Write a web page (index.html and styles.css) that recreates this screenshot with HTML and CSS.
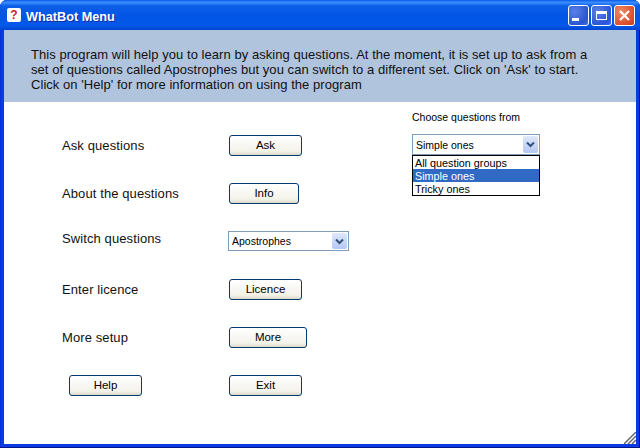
FILE: index.html
```html
<!DOCTYPE html>
<html lang="en">
<head>
    <meta charset="UTF-8">
    <title>WhatBot Menu</title>
    <link rel="stylesheet" href="styles.css">
</head>
<body>
    <div class="window">
        <div class="titlebar">
            <div class="app-icon">?</div>
            <div class="title">WhatBot Menu</div>
            <div class="controls">
                <div class="ctl"><span class="min-glyph"></span></div>
                <div class="ctl"><span class="max-glyph"></span></div>
                <div class="ctl ctl-close">
                    <svg width="13" height="13" viewBox="0 0 13 13"><path d="M2 2 L11 11 M11 2 L2 11" stroke="#fff" stroke-width="2.2" fill="none"/></svg>
                </div>
            </div>
        </div>
        <div class="client">
            <div class="banner">
                This program will help you to learn by asking questions. At the moment, it is set up to ask from a<br>
                set of questions called Apostrophes but you can switch to a different set. Click on 'Ask' to start.<br>
                Click on 'Help' for more information on using the program
            </div>
            <div class="main">
                <div class="menu">
                    <div class="label">Ask questions</div>
                    <div class="btn w73">Ask</div>
                    <div class="label">About the questions</div>
                    <div class="btn w70">Info</div>
                    <div class="label label-up">Switch questions</div>
                    <div class="combo combo-wide">
                        <span>Apostrophes</span>
                        <div class="arrow"><svg width="9" height="7" viewBox="0 0 9 7"><path d="M1 1.5 L4.5 5 L8 1.5" stroke="#36507e" stroke-width="2" fill="none"/></svg></div>
                    </div>
                    <div class="label">Enter licence</div>
                    <div class="btn w73">Licence</div>
                    <div class="label">More setup</div>
                    <div class="btn w78">More</div>
                    <div class="btn w73 btn-help">Help</div>
                    <div class="btn w73">Exit</div>
                </div>
                <div class="chooser">
                    <div class="small-label">Choose questions from</div>
                    <div class="combo-wrap">
                        <div class="combo">
                            <span>Simple ones</span>
                            <div class="arrow"><svg width="9" height="7" viewBox="0 0 9 7"><path d="M1 1.5 L4.5 5 L8 1.5" stroke="#36507e" stroke-width="2" fill="none"/></svg></div>
                        </div>
                        <div class="dropdown">
                            <div class="opt">All question groups</div>
                            <div class="opt opt-sel">Simple ones</div>
                            <div class="opt">Tricky ones</div>
                        </div>
                    </div>
                </div>
            </div>
            <svg class="grip" width="12" height="12" viewBox="0 0 12 12"><path d="M0 12 L12 0 M4 12 L12 4 M8 12 L12 8" stroke="#5f5f66" stroke-width="1.4" fill="none"/></svg>
        </div>
    </div>
</body>
</html>
```

FILE: styles.css
```css
html, body {
    margin: 0;
    padding: 0;
    background: #fff;
}

.window {
    width: 640px;
    height: 448px;
    display: flex;
    flex-direction: column;
    box-sizing: border-box;
    background: #0a3be0;
    border-radius: 7px 7px 0 0;
    overflow: hidden;
    box-shadow: inset 0 -1px #00138c, inset -1px 0 #00138c, inset 1px 0 #0831d9;
    font-family: "Liberation Sans", sans-serif;
    color: #000;
}

.titlebar {
    height: 30px;
    flex: none;
    display: flex;
    align-items: center;
    padding: 0 5px 0 7px;
    background: linear-gradient(#0a5be8 0%, #3b8dff 8%, #0a5ee6 20%, #0155e6 55%, #0358ea 85%, #0246d0 100%);
}

.app-icon {
    width: 14px;
    height: 14px;
    border-radius: 2px;
    background: #fff;
    color: #c8252b;
    font: bold 12px/14px "Liberation Sans", sans-serif;
    text-align: center;
    margin-right: 5px;
}

.title {
    flex: 1;
    padding-top: 3px;
    color: #fff;
    font: bold 12.7px "Liberation Sans", sans-serif;
    text-shadow: 1px 1px #0b2e9a;
}

.controls {
    display: flex;
    gap: 2px;
}

.ctl {
    width: 19px;
    height: 19px;
    border: 1px solid #fff;
    border-radius: 3px;
    background: radial-gradient(circle at 30% 30%, #5b82e6, #2a55d2 70%, #3f6fe6);
    position: relative;
    display: flex;
    align-items: center;
    justify-content: center;
}

.ctl-close {
    background: radial-gradient(circle at 30% 30%, #ee8a68, #dd5230 65%, #c93c18);
}

.min-glyph {
    width: 7px;
    height: 3px;
    background: #fff;
    margin: 8px 6px 0 0;
}

.max-glyph {
    width: 11px;
    height: 9px;
    border: 1px solid #fff;
    border-top-width: 3px;
    box-sizing: border-box;
}

.client {
    flex: 1;
    margin: 0 4px 4px;
    background: #fff;
    position: relative;
}

.banner {
    height: 72px;
    box-sizing: border-box;
    padding: 17px 0 0 27px;
    background: #b0c4de;
    font: 13px/15px "Liberation Sans", sans-serif;
    letter-spacing: 0.05px;
    color: #111;
}

.main {
    display: flex;
}

.menu {
    width: 350px;
    box-sizing: border-box;
    padding: 33px 0 0 58px;
    display: grid;
    grid-template-columns: 166px 1fr;
    grid-auto-rows: 21px;
    row-gap: 27px;
    align-items: center;
}

.label {
    font-size: 13px;
    letter-spacing: 0.1px;
    color: #111;
}

.label-up {
    margin-top: -6px;
}

.btn {
    height: 21px;
    box-sizing: border-box;
    margin-left: 1px;
    border: 1px solid #003c74;
    border-radius: 3px;
    background: linear-gradient(#fff, #f3f2ea 80%, #dcd8c8);
    font-size: 11.5px;
    line-height: 19px;
    text-align: center;
}

.w70 { width: 70px; }
.w73 { width: 73px; }
.w78 { width: 78px; }

.btn-help {
    margin-left: 7px;
}

.combo {
    height: 21px;
    box-sizing: border-box;
    border: 1px solid #7f9db9;
    background: #fff;
    display: flex;
    align-items: center;
    justify-content: space-between;
    padding: 0 1px 0 3px;
    font-size: 10.5px;
}

.combo-wide {
    width: 121px;
    height: 20px;
    margin-top: -1px;
}

.arrow {
    width: 15px;
    height: calc(100% - 2px);
    border-radius: 2px;
    background: linear-gradient(#dfe8fb, #b4c7f3);
    display: flex;
    align-items: center;
    justify-content: center;
}

.chooser {
    width: 128px;
    margin-left: 58px;
    padding-top: 9px;
}

.small-label {
    font-size: 10.5px;
    line-height: 13px;
    margin-bottom: 10px;
}

.combo-wrap {
    position: relative;
}

.dropdown {
    position: absolute;
    left: 0;
    right: 0;
    top: 21px;
    box-sizing: border-box;
    border: 1px solid #000;
    background: #fff;
    font-size: 10.8px;
}

.opt {
    height: 13px;
    line-height: 15px;
    padding-left: 2px;
}

.opt-sel {
    background: #316ac5;
    color: #fff;
}

.grip {
    position: absolute;
    right: 0;
    bottom: 0;
}
```
